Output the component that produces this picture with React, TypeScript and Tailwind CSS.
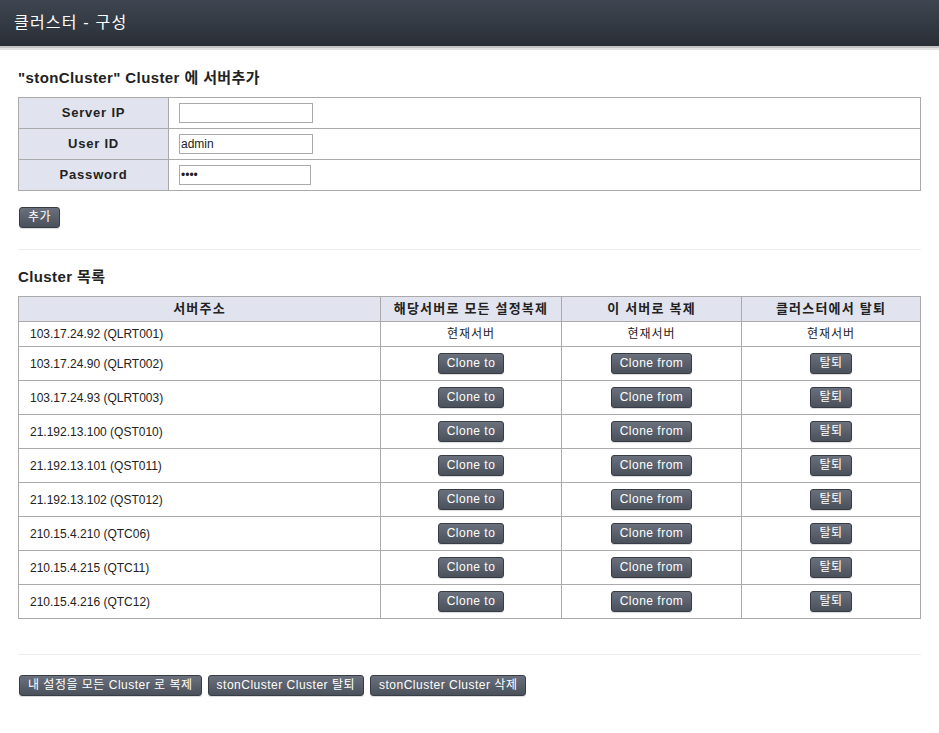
const font = "font-['Liberation_Sans','Noto_Sans_CJK_KR',sans-serif]";

const servers = [
  { addr: "103.17.24.92 (QLRT001)", current: true },
  { addr: "103.17.24.90 (QLRT002)" },
  { addr: "103.17.24.93 (QLRT003)" },
  { addr: "21.192.13.100 (QST010)" },
  { addr: "21.192.13.101 (QST011)" },
  { addr: "21.192.13.102 (QST012)" },
  { addr: "210.15.4.210 (QTC06)" },
  { addr: "210.15.4.215 (QTC11)" },
  { addr: "210.15.4.216 (QTC12)" },
];

function Btn({ children }: { children: React.ReactNode }) {
  return (
    <button className="h-[21px] px-[8px] rounded-[3px] border border-[#383d45] bg-gradient-to-b from-[#6a717d] to-[#4b515b] text-white text-[12px] leading-[19px] tracking-[0.5px] shadow-[0_1px_1px_rgba(0,0,0,0.15)] whitespace-nowrap">
      {children}
    </button>
  );
}

function FormRow({ label, children }: { label: string; children: React.ReactNode }) {
  return (
    <tr className="h-[31px]">
      <th className="w-[150px] bg-[#e1e4ee] border border-[#aaa] text-[13px] font-bold text-[#222] tracking-[0.8px]">
        {label}
      </th>
      <td className="border border-[#aaa] pl-[10px]">{children}</td>
    </tr>
  );
}

export default function App() {
  return (
    <div className={`${font} bg-white min-h-[733px] text-[#222]`}>
      <div className="h-[46px] bg-gradient-to-b from-[#3e4651] to-[#2a2f36] flex items-center px-[14px]">
        <span className="text-white text-[16px] tracking-[1.2px]">클러스터 - 구성</span>
      </div>
      <div className="h-[2px] bg-[#c4c4c4]" />
      <div className="h-[2px] bg-[#e4e4e4]" />

      <div className="px-[18px]">
        <h2 className="mt-[18px] text-[15px] font-bold leading-[20px] tracking-[0.4px]">"stonCluster" Cluster 에 서버추가</h2>
        <table className="mt-[9px] w-full border-collapse border border-[#aaa] text-[12px]">
          <tbody>
            <FormRow label="Server IP">
              <input className="block w-[134px] h-[20px] border border-[#aaa] outline-none px-[1px] text-[12px]" />
            </FormRow>
            <FormRow label="User ID">
              <input className="block w-[134px] h-[20px] border border-[#aaa] outline-none px-[1px] text-[12px]" defaultValue="admin" />
            </FormRow>
            <FormRow label="Password">
              <input type="password" className="block w-[132px] h-[20px] border border-[#aaa] outline-none px-[1px] text-[12px]" defaultValue="1234" />
            </FormRow>
          </tbody>
        </table>

        <div className="mt-[16px] pl-[1px] flex">
          <Btn>추가</Btn>
        </div>

        <div className="mt-[21px] h-px bg-[#eee]" />

        <h2 className="mt-[17px] text-[15px] font-bold leading-[20px] tracking-[0.4px]">Cluster 목록</h2>
        <table className="mt-[9px] w-full border-collapse border border-[#aaa] text-[12px]">
          <thead>
            <tr className="h-[25px] bg-[#e1e4ee] text-[13px] tracking-[1.2px]">
              <th className="w-[362px] border border-[#aaa] font-bold">서버주소</th>
              <th className="w-[181px] border border-[#aaa] font-bold">해당서버로 모든 설정복제</th>
              <th className="w-[180px] border border-[#aaa] font-bold">이 서버로 복제</th>
              <th className="border border-[#aaa] font-bold">클러스터에서 탈퇴</th>
            </tr>
          </thead>
          <tbody>
            {servers.map((s) => (
              <tr key={s.addr} className={s.current ? "h-[25px]" : "h-[34px]"}>
                <td className="border border-[#aaa] pl-[11px]">{s.addr}</td>
                {s.current ? (
                  <>
                    <td className="border border-[#aaa] text-center tracking-[1px]">현재서버</td>
                    <td className="border border-[#aaa] text-center tracking-[1px]">현재서버</td>
                    <td className="border border-[#aaa] text-center tracking-[1px]">현재서버</td>
                  </>
                ) : (
                  <>
                    <td className="border border-[#aaa] text-center"><Btn>Clone to</Btn></td>
                    <td className="border border-[#aaa] text-center"><Btn>Clone from</Btn></td>
                    <td className="border border-[#aaa] text-center"><Btn>탈퇴</Btn></td>
                  </>
                )}
              </tr>
            ))}
          </tbody>
        </table>

        <div className="mt-[35px] h-px bg-[#eee]" />

        <div className="mt-[20px] flex gap-[6px] pl-[1px]">
          <Btn>내 설정을 모든 Cluster 로 복제</Btn>
          <Btn>stonCluster Cluster 탈퇴</Btn>
          <Btn>stonCluster Cluster 삭제</Btn>
        </div>
      </div>
    </div>
  );
}
